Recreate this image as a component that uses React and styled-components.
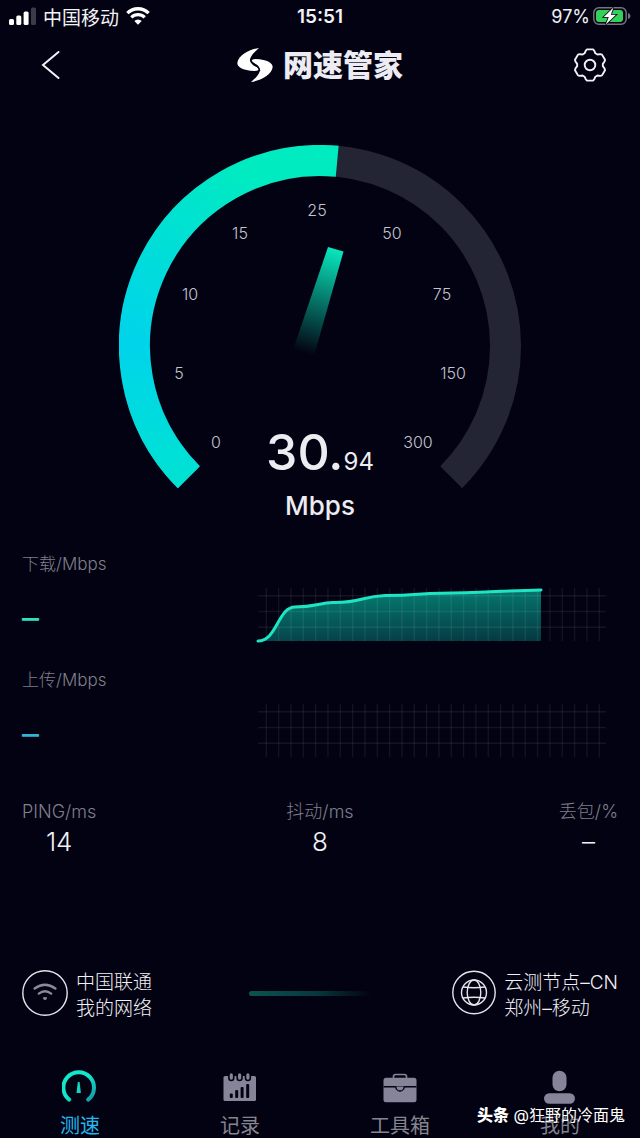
import React from 'react';
import styled, { createGlobalStyle } from 'styled-components';

const GlobalStyle = createGlobalStyle`
  * {
    box-sizing: border-box;
  }

  body {
    margin: 0;
    background: #030212;
    color: #f2f2f6;
    font-family: Inter, 'Noto Sans CJK SC', sans-serif;
    font-size: 18px;
    font-weight: 300;
  }
`;

const Page = styled.div`
  display: flex;
  flex-direction: column;
  min-height: 100vh;
`;

const StatusBar = styled.div`
  display: grid;
  grid-template-columns: 1fr auto 1fr;
  align-items: center;
  height: 32px;
  padding: 0 9px;
  font-weight: 400;
`;

const StatusGroup = styled.div`
  display: flex;
  align-items: center;
  gap: ${({ $gap }) => $gap}px;
  justify-content: ${({ $end }) => ($end ? 'flex-end' : 'flex-start')};
`;

const Carrier = styled.span`
  font-size: 19px;
`;

const Clock = styled.time`
  font-size: 19px;
  font-weight: 600;
`;

const Header = styled.header`
  display: flex;
  align-items: center;
  justify-content: space-between;
  height: 66px;
  padding: 0 32px;
`;

const IconButton = styled.button`
  display: flex;
  padding: 0;
  border: none;
  background: none;
  color: #f2f2f6;
  cursor: pointer;
`;

const Brand = styled.h1`
  display: flex;
  align-items: center;
  gap: 10px;
  margin: 0;
  color: #ececf2;
  font-size: 30px;
  line-height: 36px;
  font-weight: 900;
`;

const GaugePanel = styled.section`
  display: grid;
  justify-items: center;
  margin-top: 47px;

  > * {
    grid-area: 1 / 1;
  }
`;

const ScaleLabel = styled.text`
  fill: #c4c4ce;
  font-size: 16px;
  font-weight: 300;
  text-anchor: middle;
`;

const Readout = styled.div`
  padding-top: 279px;
  text-align: center;
  color: #ececf1;
`;

const Speed = styled.div`
  font-size: 50px;
  line-height: 56px;
  font-weight: 500;
`;

const Decimals = styled.span`
  font-size: 24px;
  line-height: 24px;
  font-weight: 400;
`;

const Unit = styled.div`
  margin-top: 8px;
  font-size: 26px;
  line-height: 36px;
  font-weight: 500;
`;

const Metrics = styled.section`
  margin-top: 28px;
  padding: 0 33px 0 22px;
`;

const Metric = styled.div`
  display: flex;
  justify-content: space-between;
  align-items: flex-start;
  height: 116px;
`;

const Label = styled.div`
  color: #7f7f8b;
  font-size: ${({ $small }) => ($small ? 17 : 18)}px;
  line-height: 24px;
`;

const MetricValue = styled.div`
  margin-top: 22px;
  color: ${({ $color }) => $color};
  font-size: 34px;
  line-height: 40px;
  font-weight: 400;
`;

const Chart = styled.svg`
  width: 350px;
  margin-top: 34px;
  overflow: visible;
`;

const Stats = styled.section`
  display: grid;
  grid-template-columns: 1fr auto 1fr;
  margin-top: 16px;
  padding: 0 22px;
  text-align: center;
`;

const Stat = styled.div`
  justify-self: ${({ $side }) => $side};
`;

const StatValue = styled.div`
  font-size: 26px;
  line-height: 36px;
`;

const Route = styled.section`
  display: flex;
  align-items: flex-start;
  justify-content: space-between;
  margin-top: auto;
  padding: 0 22px;
`;

const Endpoint = styled.div`
  display: flex;
  gap: 8px;
  font-size: 19px;
  line-height: 26px;
`;

const Beam = styled.div`
  width: 122px;
  height: 5px;
  margin: 21px 0 0 16px;
  border-radius: 3px;
  background: linear-gradient(90deg, #0b5450, #07383d 55%, transparent);
`;

const TabBar = styled.nav`
  position: relative;
  display: grid;
  grid-template-columns: repeat(4, 1fr);
  margin-top: 47px;
`;

const Tab = styled.a`
  display: flex;
  flex-direction: column;
  align-items: center;
  gap: 9px;
  color: #85859a;
  font-size: 20px;
  line-height: 24px;
  font-weight: 400;
  text-decoration: none;
`;

const TabText = styled.span`
  color: ${({ $active }) => ($active ? '#22b9ee' : '#85858f')};
`;

const Watermark = styled.div`
  position: absolute;
  right: 15px;
  bottom: 11px;
  color: #fff;
  font-size: 16px;
  line-height: 24px;
  font-weight: 400;
  text-shadow: 0 0 2px rgba(0, 0, 0, 0.6);
  pointer-events: none;

  b {
    font-weight: 900;
  }
`;

const SCALE = [
  { text: '0', x: 97, y: 303 },
  { text: '5', x: 60, y: 234 },
  { text: '10', x: 71, y: 155 },
  { text: '15', x: 121, y: 94 },
  { text: '25', x: 198, y: 71 },
  { text: '50', x: 273, y: 94 },
  { text: '75', x: 323, y: 155 },
  { text: '150', x: 334, y: 234 },
  { text: '300', x: 299, y: 303 },
];

const STATS = [
  { label: 'PING/ms', value: '14', side: 'start' },
  { label: '抖动/ms', value: '8', side: 'center' },
  { label: '丢包/%', value: '–', side: 'end' },
];

const SignalIcon = () => (
  <svg width="27" height="18" viewBox="0 0 27 18" fill="#fff" aria-hidden="true">
    <rect x="0" y="12" width="5" height="6" rx="1.5" />
    <rect x="7.3" y="8.5" width="5" height="9.5" rx="1.5" />
    <rect x="14.6" y="4.5" width="5" height="13.5" rx="1.5" />
    <rect x="22" y="0.5" width="5" height="17.5" rx="1.5" fill="#3b3a48" />
  </svg>
);

const StatusWifi = () => (
  <svg width="24" height="18" viewBox="0 0 24 18" fill="none" stroke="#fff" aria-hidden="true">
    <path d="M1.4 6.1a15.2 15.2 0 0 1 21.2 0" strokeWidth="3.4" />
    <path d="M5.3 10.3a9.6 9.6 0 0 1 13.4 0" strokeWidth="3.2" />
    <path d="M12 17.8 8.3 14a5.3 5.3 0 0 1 7.4 0z" fill="#fff" stroke="none" />
  </svg>
);

const Battery = () => (
  <svg width="38" height="18" viewBox="0 0 38 18" aria-hidden="true">
    <rect x="0.8" y="0.8" width="32.4" height="16.4" rx="5" fill="none" stroke="#77767f" strokeWidth="1.4" />
    <rect x="3" y="3" width="27" height="12" rx="3" fill="#33d159" />
    <path d="M35 6v6c1.6-.5 2.4-1.6 2.4-3S36.6 6.5 35 6z" fill="#77767f" />
    <path d="M20.5 .6 10.8 10h5l-3 7.4L23 7.8h-5.2z" fill="#fff" stroke="#030212" strokeWidth="1.6" paintOrder="stroke" />
  </svg>
);

const BackIcon = () => (
  <svg width="36" height="30" viewBox="0 0 36 30" fill="none" stroke="currentColor" strokeWidth="2" strokeLinecap="round" aria-hidden="true">
    <path d="M26.5 2 11 15l15.5 13" />
  </svg>
);

const BrandMark = () => (
  <svg width="36" height="36" viewBox="19 20 108 108" fill="#fff" aria-hidden="true">
    <path d="M85 23C60 26 22 44 20 68C20 80 34 90 72 92C85 91 88 86 78 80C62 74 52 62 62 48C66 40 75 32 85 23Z" />
    <path d="M61 125C86 122 124 104 126 80C126 68 112 58 74 56C61 57 58 62 68 68C84 74 94 86 84 100C80 108 71 116 61 125Z" />
    <path d="M60 56C56 70 86 72 87 92" fill="none" stroke="#030212" strokeWidth="4" />
  </svg>
);

const tooth = [
  [-5.4, -11.7],
  [-4.2, -14.4],
  [-3, -15.6],
  [3, -15.6],
  [4.2, -14.4],
  [5.4, -11.7],
];

const gearPoints = [0, 60, 120, 180, 240, 300]
  .flatMap((deg) => {
    const a = (deg * Math.PI) / 180;
    return tooth.map(([x, y]) => `${x * Math.cos(a) - y * Math.sin(a)},${x * Math.sin(a) + y * Math.cos(a)}`);
  })
  .join(' ');

const GearIcon = () => (
  <svg width="36" height="36" viewBox="-18 -18 36 36" fill="none" stroke="currentColor" strokeWidth="1.9" strokeLinejoin="round" aria-hidden="true">
    <polygon points={gearPoints} />
    <circle r="5.3" />
  </svg>
);

const Gauge = () => (
  <svg width="402" height="343" viewBox="0 0 402 343" role="img" aria-label="30.94 Mbps">
    <defs>
      <linearGradient id="arc" gradientUnits="userSpaceOnUse" x1="20" y1="200" x2="150" y2="40">
        <stop offset="0" stopColor="#00d4ea" />
        <stop offset="1" stopColor="#00ebc0" />
      </linearGradient>
      <linearGradient id="arcTail" gradientUnits="userSpaceOnUse" x1="0" y1="200" x2="0" y2="340">
        <stop offset="0" stopColor="#00e2d2" stopOpacity="0" />
        <stop offset="1" stopColor="#00e2d2" />
      </linearGradient>
      <linearGradient id="needle" gradientUnits="userSpaceOnUse" x1="217" y1="104" x2="185" y2="208">
        <stop offset="0" stopColor="#08e8bd" />
        <stop offset="1" stopColor="#08e8bd" stopOpacity="0" />
      </linearGradient>
    </defs>
    <g fill="none" strokeWidth="31">
      <path d="M69.8 332.2A185.5 185.5 0 1 1 332.2 332.2" stroke="#232434" />
      <path d="M69.8 332.2A185.5 185.5 0 0 1 218.2 16.3" stroke="url(#arc)" />
      <path d="M69.8 332.2A185.5 185.5 0 0 1 15.5 201" stroke="url(#arcTail)" />
    </g>
    <path d="M209 102 224.5 106.5 195 211 174 205Z" fill="url(#needle)" />
    {SCALE.map(({ text, x, y }) => (
      <ScaleLabel key={text} x={x} y={y}>
        {text}
      </ScaleLabel>
    ))}
  </svg>
);

const columns = Array.from({ length: 28 }, (_, i) => 9.3 + i * 12.33);

const TrafficChart = ({ filled }) => (
  <Chart viewBox="0 0 350 58" aria-hidden="true">
    {filled && (
      <>
        <defs>
          <linearGradient id="area" x1="0.3" y1="0" x2="0.6" y2="1.3">
            <stop offset="0" stopColor="#057f73" />
            <stop offset="1" stopColor="#052b38" />
          </linearGradient>
        </defs>
        <path
          d="M1 55C20 55 21 21 38 21C58 21 62 17 76 16.5C104 17 104 10.5 128 9.5C160 9.5 160 7.5 184 7.3C222 6.8 244 5 284 4V55Z"
          fill="url(#area)"
        />
      </>
    )}
    <g stroke="#fff" strokeOpacity="0.07" strokeWidth="1.4">
      {columns.map((x) => (
        <path key={x} d={`M${x} 2V55`} />
      ))}
      <path d="M1 9.7H349M1 25.5H349M1 41.3H349" />
    </g>
    {filled && (
      <path
        d="M1 55C20 55 21 21 38 21C58 21 62 17 76 16.5C104 17 104 10.5 128 9.5C160 9.5 160 7.5 184 7.3C222 6.8 244 5 284 4"
        fill="none"
        stroke="#1de5c4"
        strokeWidth="3"
        strokeLinecap="round"
      />
    )}
  </Chart>
);

const NetworkIcon = () => (
  <svg width="46" height="46" viewBox="0 0 46 46" fill="none" aria-hidden="true">
    <circle cx="23" cy="23" r="22.2" stroke="#e4e4ea" strokeWidth="1.4" />
    <g stroke="#8b8a9a" strokeWidth="2.4" strokeLinecap="round">
      <path d="M12.6 18.5Q23 11 33.4 18.5" />
      <path d="M16.8 23.6Q23 19 29.2 23.6" />
    </g>
    <path d="M20.8 27.6Q23 26.4 25.2 27.6Q25 29.6 23 30.2Q21 29.6 20.8 27.6Z" fill="#8b8a9a" />
  </svg>
);

const GlobeIcon = () => (
  <svg width="44" height="46" viewBox="0 0 44 46" fill="none" stroke="#e4e4ea" strokeWidth="1.4" aria-hidden="true">
    <circle cx="22" cy="22.5" r="21.2" />
    <circle cx="22" cy="22.5" r="12.5" />
    <ellipse cx="22" cy="22.5" rx="6.8" ry="12.5" />
    <path d="M11 17Q22 18.5 33 17M11 28Q22 26.5 33 28" />
  </svg>
);

const SpeedIcon = () => (
  <svg width="36" height="36" viewBox="0 0 36 36" fill="none" aria-hidden="true">
    <defs>
      <linearGradient id="tabArc" x1="0" y1="0" x2="1" y2="1">
        <stop offset="0.5" stopColor="#12e6cb" />
        <stop offset="1" stopColor="#1496a8" />
      </linearGradient>
    </defs>
    <path d="M7.2 30.6A15.3 15.3 0 1 1 26.2 30.6" stroke="url(#tabArc)" strokeWidth="4" strokeLinecap="round" />
    <path d="M15.8 13h1.8l1.3 11h-4.4z" fill="#14d5c4" />
  </svg>
);

const RecordIcon = () => (
  <svg width="36" height="36" viewBox="0 0 36 36" fill="currentColor" aria-hidden="true">
    <rect x="1.5" y="7" width="32.5" height="25" rx="1.5" />
    <g stroke="#030212" strokeWidth="1.6">
      <rect x="6.9" y="3.5" width="4.8" height="8" rx="2.4" />
      <rect x="15.2" y="3.5" width="4.8" height="8" rx="2.4" />
      <rect x="23.5" y="3.5" width="4.8" height="8" rx="2.4" />
    </g>
    <g fill="#030212">
      <rect x="7.8" y="24.5" width="3" height="4.5" rx="1" />
      <rect x="13.2" y="21" width="3" height="8" rx="1" />
      <rect x="18.6" y="18" width="3" height="11" rx="1" />
      <rect x="24.2" y="15" width="3" height="14" rx="1" />
    </g>
  </svg>
);

const ToolboxIcon = () => (
  <svg width="36" height="36" viewBox="0 0 36 36" fill="currentColor" aria-hidden="true">
    <path d="M11.5 9V7.5a2 2 0 0 1 2-2h9a2 2 0 0 1 2 2V9" fill="none" stroke="currentColor" strokeWidth="1.6" />
    <rect x="1.5" y="8.7" width="33" height="24.5" rx="2.5" />
    <path d="M1.5 17.8H34.5" stroke="#030212" strokeWidth="1.4" />
    <path d="M13.8 17.4a4.2 4.6 0 0 0 8.4 0" stroke="#030212" strokeWidth="1.4" />
  </svg>
);

const ProfileIcon = () => (
  <svg width="36" height="36" viewBox="0 0 36 36" fill="currentColor" aria-hidden="true">
    <rect x="10.5" y="1.7" width="14" height="20.6" rx="7" />
    <rect x="2" y="24.3" width="31" height="10.4" rx="5.2" />
  </svg>
);

const TABS = [
  { label: '测速', href: '#speed', icon: SpeedIcon },
  { label: '记录', href: '#records', icon: RecordIcon },
  { label: '工具箱', href: '#tools', icon: ToolboxIcon },
  { label: '我的', href: '#me', icon: ProfileIcon },
];

const App = () => {
  return (
    <Page>
      <GlobalStyle />
      <StatusBar>
        <StatusGroup $gap={7}>
          <SignalIcon />
          <Carrier>中国移动</Carrier>
          <StatusWifi />
        </StatusGroup>
        <Clock>15:51</Clock>
        <StatusGroup $gap={3} $end>
          <span>97%</span>
          <Battery />
        </StatusGroup>
      </StatusBar>
      <Header>
        <IconButton aria-label="返回">
          <BackIcon />
        </IconButton>
        <Brand>
          <BrandMark />
          网速管家
        </Brand>
        <IconButton aria-label="设置">
          <GearIcon />
        </IconButton>
      </Header>
      <GaugePanel>
        <Gauge />
        <Readout>
          <Speed>
            30.<Decimals>94</Decimals>
          </Speed>
          <Unit>Mbps</Unit>
        </Readout>
      </GaugePanel>
      <Metrics>
        <Metric>
          <div>
            <Label $small>下载/Mbps</Label>
            <MetricValue $color="#2fe0bd">–</MetricValue>
          </div>
          <TrafficChart filled />
        </Metric>
        <Metric>
          <div>
            <Label $small>上传/Mbps</Label>
            <MetricValue $color="#35b3cf">–</MetricValue>
          </div>
          <TrafficChart />
        </Metric>
      </Metrics>
      <Stats>
        {STATS.map(({ label, value, side }) => (
          <Stat key={label} $side={side}>
            <Label>{label}</Label>
            <StatValue>{value}</StatValue>
          </Stat>
        ))}
      </Stats>
      <Route>
        <Endpoint>
          <NetworkIcon />
          <div>
            中国联通
            <br />
            我的网络
          </div>
        </Endpoint>
        <Beam />
        <Endpoint>
          <GlobeIcon />
          <div>
            云测节点–CN
            <br />
            郑州–移动
          </div>
        </Endpoint>
      </Route>
      <TabBar>
        {TABS.map(({ label, href, icon: Icon }, i) => (
          <Tab key={label} href={href}>
            <Icon />
            <TabText $active={i === 0}>{label}</TabText>
          </Tab>
        ))}
        <Watermark>
          <b>头条</b> @狂野的冷面鬼
        </Watermark>
      </TabBar>
    </Page>
  );
};

export default App;
